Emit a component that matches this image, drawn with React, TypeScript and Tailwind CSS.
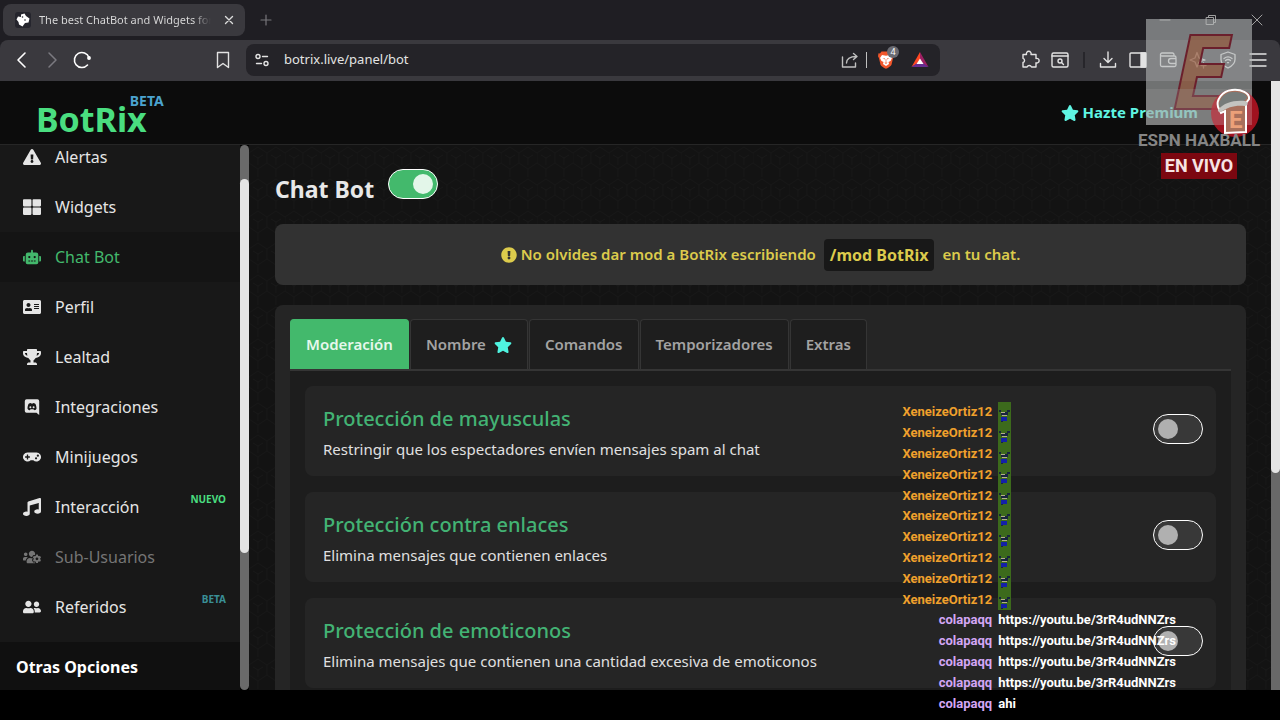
import React from 'react';
import {
  FaAddressCard,
  FaExclamationCircle,
  FaExclamationTriangle,
  FaGamepad,
  FaMusic,
  FaRobot,
  FaStar,
  FaThLarge,
  FaTrophy,
  FaUserFriends,
  FaUsersCog,
} from 'react-icons/fa';

const DiscordIcon = () => (
  <svg viewBox="0 0 20 20" className="h-[18px] w-[18px]" fill="currentColor">
    <path
      fillRule="evenodd"
      d="M4 1.500h12A2 2 0 0 1 18 3.500V19l-3-2.500H4a2 2 0 0 1-2-2v-11a2 2 0 0 1 2-2zM5 12c.8 1.300 2 1.600 2.600 1.600l.8-1h3.200l.8 1c.8 0 2-.4 2.600-1.600 0-2-.5-4-1.300-5.500-.8-.6-1.600-.8-2.300-.9l-.4.600H9l-.4-.6c-.8.1-1.600.4-2.300.9C5.500 8 5 10 5 12zm3.200-2.900a1.100 1.100 0 1 1 0 2.200 1.100 1.100 0 0 1 0-2.200zm3.600 0a1.100 1.100 0 1 1 0 2.200 1.100 1.100 0 0 1 0-2.200z"
    />
  </svg>
);

const menu = [
  { label: 'Alertas', icon: <FaExclamationTriangle /> },
  { label: 'Widgets', icon: <FaThLarge /> },
  { label: 'Chat Bot', icon: <FaRobot />, active: true },
  { label: 'Perfil', icon: <FaAddressCard /> },
  { label: 'Lealtad', icon: <FaTrophy /> },
  { label: 'Integraciones', icon: <DiscordIcon /> },
  { label: 'Minijuegos', icon: <FaGamepad /> },
  { label: 'Interacción', icon: <FaMusic />, badge: 'NUEVO', badgeColor: 'text-[#4ade80]' },
  { label: 'Sub-Usuarios', icon: <FaUsersCog />, disabled: true },
  { label: 'Referidos', icon: <FaUserFriends />, badge: 'BETA', badgeColor: 'text-[#3a8f96]' },
];

const tabs = ['Moderación', 'Nombre', 'Comandos', 'Temporizadores', 'Extras'];

const protections = [
  { title: 'Protección de mayusculas', text: 'Restringir que los espectadores envíen mensajes spam al chat' },
  { title: 'Protección contra enlaces', text: 'Elimina mensajes que contienen enlaces' },
  { title: 'Protección de emoticonos', text: 'Elimina mensajes que contienen una cantidad excesiva de emoticonos' },
];

const link = 'https://youtu.be/3rR4udNNZrs';
const messages = [
  ...Array.from({ length: 10 }, () => ({ user: 'XeneizeOrtiz12', text: '' })),
  ...Array.from({ length: 4 }, () => ({ user: 'colapaqq', text: link })),
  { user: 'colapaqq', text: 'ahi' },
];

const Stroke = ({ children, className = '' }: { children: React.ReactNode; className?: string }) => (
  <svg
    viewBox="0 0 20 20"
    className={`w-5 h-5 shrink-0 ${className}`}
    fill="none"
    stroke="currentColor"
    strokeWidth="1.4"
    strokeLinecap="round"
    strokeLinejoin="round"
  >
    {children}
  </svg>
);

const IconButton = ({ label, children }: { label: string; children: React.ReactNode }) => (
  <button aria-label={label} className="flex w-[30px] justify-center">
    {children}
  </button>
);

const TabStrip = () => (
  <div className="flex h-10 items-center justify-between bg-[#1f1e23] pl-[3px]">
    <div className="flex items-center">
      <div className="flex h-8 w-[242px] items-center rounded-lg bg-[#3a393e] pr-[6px] pl-3">
        <svg viewBox="0 0 16 16" className="mr-2 h-4 w-4 shrink-0">
          <rect width="16" height="16" rx="3" fill="#25252d" />
          <path d="M6 2.500L9.500 1.500 11 4l3.500 2.500-1 4-3.500.5-2.500 3.500L4 12.500 3.500 10 1.500 7.500 3 4.500l3 .5z" fill="#fff" />
          <circle cx="7.500" cy="5" r=".8" fill="#25252d" />
          <circle cx="10" cy="8" r=".8" fill="#25252d" />
        </svg>
        <span className="flex-1 overflow-hidden whitespace-nowrap bg-linear-to-r from-[#dcdcdc] from-90% to-[#3a393e] bg-clip-text text-[11px] text-transparent">
          The best ChatBot and Widgets for
        </span>
        <button aria-label="Cerrar pestaña" className="ml-2 text-[#dcdcdc]">
          <Stroke>
            <path d="M6.500 6.500l7 7M13.500 6.500l-7 7" />
          </Stroke>
        </button>
      </div>
      <button aria-label="Nueva pestaña" className="ml-[11px] text-[#77767b]">
        <Stroke>
          <path d="M10 5v10M5 10h10" strokeWidth="1.200" />
        </Stroke>
      </button>
    </div>
    <div className="flex items-center gap-[26px] pr-[13px] text-[#a0a0a0]">
      <button aria-label="Minimizar">
        <Stroke>
          <path d="M5 10h10" strokeWidth="1" />
        </Stroke>
      </button>
      <button aria-label="Restaurar">
        <Stroke>
          <path d="M5.500 7.500h7v7h-7zM7.500 7.500v-2h7v7h-2" strokeWidth="1" />
        </Stroke>
      </button>
      <button aria-label="Cerrar">
        <Stroke>
          <path d="M5 5l10 10M15 5L5 15" strokeWidth="1" />
        </Stroke>
      </button>
    </div>
  </div>
);

const Toolbar = () => (
  <div className="bg-[#1f1e23]">
    <div className="flex h-[41px] items-center rounded-t-lg bg-[#3a393e] pr-[7px] pb-px pl-[7px] text-[#e3e3e3]">
      <IconButton label="Atrás">
        <Stroke className="text-white">
          <path d="M13 3l-7 7 7 7" strokeWidth="1.600" />
        </Stroke>
      </IconButton>
      <IconButton label="Adelante">
        <Stroke className="text-[#7b7a80]">
          <path d="M7 3l7 7-7 7" strokeWidth="1.500" />
        </Stroke>
      </IconButton>
      <IconButton label="Recargar">
        <Stroke className="text-white">
          <path d="M15.500 15a7.500 7.500 0 1 1 1.500-7.500" strokeWidth="1.600" />
          <circle cx="17" cy="8" r="1.200" fill="currentColor" />
        </Stroke>
      </IconButton>
      <div className="ml-[111px]">
        <IconButton label="Marcador">
          <Stroke>
            <path d="M4.500 2.500h11v15L10 13.500l-5.500 4z" />
          </Stroke>
        </IconButton>
      </div>
      <div className="ml-2 flex h-8 w-[694px] shrink items-center rounded-lg bg-[#242328] pr-[10px] pl-[6px]">
        <Stroke>
          <circle cx="6" cy="6.500" r="2" />
          <path d="M10.500 6.500h5M4.500 13.500h5" />
          <circle cx="14" cy="13.500" r="2" />
        </Stroke>
        <input
          aria-label="Dirección"
          defaultValue="botrix.live/panel/bot"
          className="ml-3 min-w-0 flex-1 bg-transparent text-[13px] text-[#e3e3e3] outline-none"
        />
        <button aria-label="Compartir" className="text-[#c0c0c0]">
          <Stroke>
            <path d="M2.500 7v10h13v-4M6.500 13c0-4 3-6.500 10-6.500M13.500 3.500l3.500 3-3.500 3" />
          </Stroke>
        </button>
        <span className="mx-[6px] h-4 w-px bg-[#c0c0c0]" />
        <button aria-label="Escudos" className="relative ml-[3px]">
          <svg viewBox="0 0 20 20" className="h-5 w-5">
            <path d="M5.500 1.500h9l1.500 2 1.500-.2.500 3-1 2-1.500 6.500c-.4 1.300-3 3-5.500 4-2.500-1-5.100-2.700-5.500-4L3 8.300l-1-2 .500-3 1.500.2z" fill="#f1562b" />
            <path d="M6 5l4 .8L14 5l2 3-1.500 3-2 1 .5 2-3 2-3-2 .5-2-2-1L4 8z" fill="#fff" />
            <path d="M6.500 8l2.500.6v1zM13.500 8l-2.500.6v1zM8.500 12.500h3L10 14zM9.700 9h.6v3h-.6z" fill="#f1562b" />
          </svg>
          <span className="absolute -top-1 left-[11px] h-3 w-3 rounded-full bg-[#6b6b72] text-center text-[9px] leading-3 text-white">
            4
          </span>
        </button>
        <button aria-label="Recompensas" className="ml-[14px]">
          <svg viewBox="0 0 20 20" className="h-5 w-5">
            <path d="M10 2L1.500 17 10 12z" fill="#ff4724" />
            <path d="M10 2l8.500 15L10 12z" fill="#9e1f63" />
            <path d="M1.500 17h17L10 11z" fill="#662d91" />
            <path d="M10 8.500l3.500 5.500h-7z" fill="#fff" />
          </svg>
        </button>
      </div>
      <div className="ml-auto flex items-center">
        <IconButton label="Extensiones">
          <Stroke>
            <path d="M3 4.500h3.500a2.400 2.400 0 1 1 4.500 0h5v4a2.300 2.300 0 1 1 0 4.300V17h-4.500a2.400 2.400 0 0 0-4.400 0H3v-4.500a2.200 2.200 0 0 0 0-4.200z" />
          </Stroke>
        </IconButton>
        <IconButton label="Buscar pestañas">
          <Stroke>
            <rect x="2" y="3" width="16" height="14" rx="1.500" />
            <path d="M2 6h16M11.500 12.500l2 2" />
            <circle cx="10" cy="11" r="2" />
          </Stroke>
        </IconButton>
        <span className="mx-[8px] h-4 w-[2px] bg-[#27262b]" />
        <IconButton label="Descargas">
          <Stroke>
            <path d="M10 2v10M6 8.500l4 4 4-4M2.500 13.500v3.500h15v-3.500" />
          </Stroke>
        </IconButton>
        <IconButton label="Panel lateral">
          <Stroke>
            <rect x="2" y="3" width="16" height="14" rx="1" />
            <path d="M13 3h5v14h-5z" fill="currentColor" />
          </Stroke>
        </IconButton>
        <IconButton label="Cartera">
          <Stroke>
            <path d="M16 6V4.500A1.500 1.500 0 0 0 14.500 3H4a1.500 1.500 0 0 0 0 3h12.500A1.500 1.500 0 0 1 18 7.500M2.500 4.500V15A1.500 1.500 0 0 0 4 16.500h12.500A1.500 1.500 0 0 0 18 15v-1M18 8.500h-5a2.500 2.500 0 0 0 0 5h5z" strokeWidth="1.300" />
          </Stroke>
        </IconButton>
        <IconButton label="Leo">
          <Stroke>
            <path d="M9 2.500l2 5.500 6 2-6 2-2 5-2-5-5-2 5-2zM15.500 13v5M13 15.500h5" strokeWidth="1.300" />
          </Stroke>
        </IconButton>
        <IconButton label="VPN">
          <Stroke>
            <path d="M10 2l7 2.500v5c0 4.500-4 7-7 8.500-3-1.500-7-4-7-8.500v-5zM6 8.500a6.500 6.500 0 0 1 8 0M7.500 10.500a4 4 0 0 1 5 0M9.500 12.700h1" strokeWidth="1.300" />
          </Stroke>
        </IconButton>
        <IconButton label="Menú">
          <Stroke>
            <path d="M2 4h16M2 10h16M2 16h16" />
          </Stroke>
        </IconButton>
      </div>
    </div>
  </div>
);

const Header = () => (
  <header className="flex h-16 shrink-0 items-center justify-between border-b border-[#262626] bg-[#0c0c0c] pr-[73px] pl-9">
    <a href="#inicio" className="flex items-start pt-3 font-bold">
      <span className="text-[34px] leading-10 text-[#4ade80]">BotRix</span>
      <span className="-mt-2 -ml-[17px] text-sm leading-5 text-[#4ba3cf]">BETA</span>
    </a>
    <a href="#premium" className="flex items-center gap-1 text-[15px] font-bold text-[#5ff5e3]">
      <FaStar className="h-[18px] w-[18px]" />
      Hazte Premium
    </a>
  </header>
);

const Sidebar = () => (
  <aside className="flex w-[249px] shrink-0 overflow-hidden">
    <nav className="-mt-[13px] flex-1 bg-[#181818]">
      {menu.map((item) => (
        <a
          key={item.label}
          href={`#${item.label}`}
          className={`relative flex h-[50px] items-center gap-3 pl-5 text-base ${
            item.active ? 'bg-[#141414] text-[#43b86c]' : item.disabled ? 'text-[#757575]' : 'text-[#e5e5e5]'
          }`}
        >
          <span className="flex w-[23px] justify-center text-lg">{item.icon}</span>
          {item.label}
          {item.badge && (
            <span className={`absolute top-[7px] right-[14px] text-[10px] leading-5 font-bold ${item.badgeColor}`}>
              {item.badge}
            </span>
          )}
        </a>
      ))}
      <h2 className="mt-[10px] flex h-[60px] items-start bg-[#101010] px-4 pt-[13px] text-base leading-6 font-bold text-white">
        Otras Opciones
      </h2>
    </nav>
    <div className="w-[9px] rounded-full bg-[#6a6a6a] pt-[34px]">
      <div className="h-[374px] rounded-full bg-[#e4e4e4]" />
    </div>
  </aside>
);

const Switch = ({ label, on = false }: { label: string; on?: boolean }) => (
  <input
    type="checkbox"
    aria-label={label}
    defaultChecked={on}
    className="flex h-[30px] w-[50px] shrink-0 appearance-none items-center rounded-full border border-white bg-[#383838] px-1 before:h-5 before:w-5 before:rounded-full before:bg-[#b0b0b0] checked:justify-end checked:bg-[#43b96c] checked:before:bg-[#e3f6e9]"
  />
);

const Background = () => (
  <svg className="absolute inset-0 h-full w-full" aria-hidden="true">
    <defs>
      <pattern id="weave" width="36" height="32" patternUnits="userSpaceOnUse">
        <path
          d="M0 8l9-6 9 6v10l-9 6-9-6zM18 8l9-6 9 6M18 18l9 6 9-6M9 24v8M27 24v8M4 10l5 3 5-3M9 13v7M22 10l5 3 5-3M27 13v7"
          fill="none"
          stroke="#181818"
        />
      </pattern>
    </defs>
    <rect width="100%" height="100%" fill="url(#weave)" />
  </svg>
);

const Panel = () => (
  <main className="relative min-w-0 flex-1 overflow-hidden bg-[#131313]">
    <Background />
    <div className="relative pt-6 pr-[25px] pl-[26px]">
      <div className="flex h-10 gap-[14px]">
        <h1 className="text-[23px] leading-10 font-bold text-[#e8e8e8]">Chat Bot</h1>
        <Switch label="Chat Bot" on />
      </div>
      <div className="mt-[15px] flex h-[61px] items-center justify-center rounded-lg bg-[#323232] text-[15px] font-semibold text-[#dccb4c]">
        <FaExclamationCircle className="mr-1 h-4 w-4" />
        No olvides dar mod a BotRix escribiendo
        <code className="mx-2 rounded bg-[#181818] px-[6px] py-1 font-[inherit] text-base font-bold">/mod BotRix</code>
        en tu chat.
      </div>
      <section className="mt-5 rounded-lg bg-[#252525] px-[15px] pt-[14px] pb-[15px]">
        <div role="tablist" className="flex gap-px border-b-2 border-[#353535]">
          {tabs.map((tab, i) => (
            <button
              key={tab}
              role="tab"
              aria-selected={i === 0}
              className={`flex h-[50px] items-center gap-2 rounded-t border border-b-0 px-[15px] text-[15px] font-semibold ${
                i === 0 ? 'border-[#43b96c] bg-[#43b96c] text-[#e6f8ec]' : 'border-[#353535] bg-[#1e1e1e] text-[#a3a3a3]'
              }`}
            >
              {tab}
              {tab === 'Nombre' && <FaStar className="h-[18px] w-[18px] text-[#4ff3e0]" />}
            </button>
          ))}
        </div>
        <div className="space-y-4 bg-[#1d1d1d] p-[15px]">
          {protections.map((item) => (
            <div key={item.title} className="flex h-[90px] items-center justify-between rounded-lg bg-[#252525] pr-[13px] pb-1 pl-[18px]">
              <div className="pt-2">
                <h3 className="text-xl leading-8 font-medium text-[#43b374]">{item.title}</h3>
                <p className="text-[15px] leading-7 text-[#e0e0e0]">{item.text}</p>
              </div>
              <Switch label={item.title} />
            </div>
          ))}
        </div>
      </section>
    </div>
  </main>
);

const Emote = () => (
  <svg viewBox="0 0 13 21" className="h-full w-[13px]" preserveAspectRatio="none" shapeRendering="crispEdges">
    <rect width="13" height="21" fill="#3c6a1c" />
    <path d="M1 8h2v2H1zM9 8h3v2H9zM3 10h7v3H3z" fill="#18243f" />
    <path d="M3 10h4v1H3zM4 13h5v1H4z" fill="#b3ac8d" />
    <path d="M3 15h6v4H3z" fill="#1420a8" />
    <path d="M3 19h2v1H3z" fill="#18243f" />
  </svg>
);

const ChatOverlay = () => (
  <div className="absolute right-[104px] bottom-[6px] grid h-[312px] auto-rows-fr grid-cols-[auto_auto] items-center gap-x-[6px] font-[Roboto,sans-serif] text-[13px] leading-5 font-bold">
    {messages.map((message, i) => (
      <React.Fragment key={i}>
        <span className={`text-right ${message.text ? 'text-[#d3a6f5]' : 'text-[#f0a02c]'}`}>{message.user}</span>
        {message.text ? <span className="text-white">{message.text}</span> : <Emote />}
      </React.Fragment>
    ))}
  </div>
);

const StreamLogo = () => (
  <div className="absolute top-[19px] right-[20px] flex w-[122px] flex-col items-center font-[Roboto,sans-serif] font-bold">
    <svg viewBox="0 0 122 108" className="h-[108px] w-[122px] overflow-visible">
      <rect x="8" width="106" height="106" fill="#b4b8b8" fillOpacity=".6" />
      <text
        x="34"
        y="90"
        fontSize="104"
        fontStyle="italic"
        fill="#96502e"
        fillOpacity=".6"
        stroke="#6b1f2c"
        strokeWidth="2"
        className="font-['Open_Sans']"
      >
        E
      </text>
      <circle cx="97" cy="94" r="24" fill="#c51424" fillOpacity=".8" />
      <path d="M8 70h106v36H8z" fill="#a0a0a0" fillOpacity=".25" />
      <path d="M80 88c-2-7 4-16 14-17 9-1 18 3 17 9l-3 4v29l-21 1V92l-4 2z" fill="#a8705c" stroke="#fff" strokeWidth="2" />
      <path d="M81 87c0-8 7-15 15-14 8 0 13 2 13 6l-5 5c-7-1-14 2-19 7z" fill="#777c7a" />
      <path d="M81 90c5-6 14-9 26-8 4 1 3 5 0 5-10-1-17 1-24 6-3 0-4-1-2-3z" fill="#c4c4c0" />
      <text x="91" y="109" fontSize="24" fill="#eba079">
        E
      </text>
    </svg>
    <span className="text-[17px] leading-[26px] whitespace-nowrap text-[#858585]">ESPN HAXBALL</span>
    <span className="bg-[#7c0710] px-1 text-[18px] leading-[26px] whitespace-nowrap text-[#f6e4e4]">EN VIVO</span>
  </div>
);

const App: React.FC = () => {
  return (
    <div className="relative flex h-screen flex-col overflow-hidden bg-black pb-[30px] font-['Noto_Sans','Open_Sans',sans-serif]">
      <TabStrip />
      <Toolbar />
      <div className="flex min-h-0 flex-1">
        <div className="flex min-w-0 flex-1 flex-col">
          <Header />
          <div className="flex min-h-0 flex-1">
            <Sidebar />
            <Panel />
          </div>
        </div>
        <div className="w-[9px] bg-[#686868]">
          <div className="h-[392px] rounded-b-full bg-[#e4e4e4]" />
        </div>
      </div>
      <ChatOverlay />
      <StreamLogo />
    </div>
  );
};

export default App;
